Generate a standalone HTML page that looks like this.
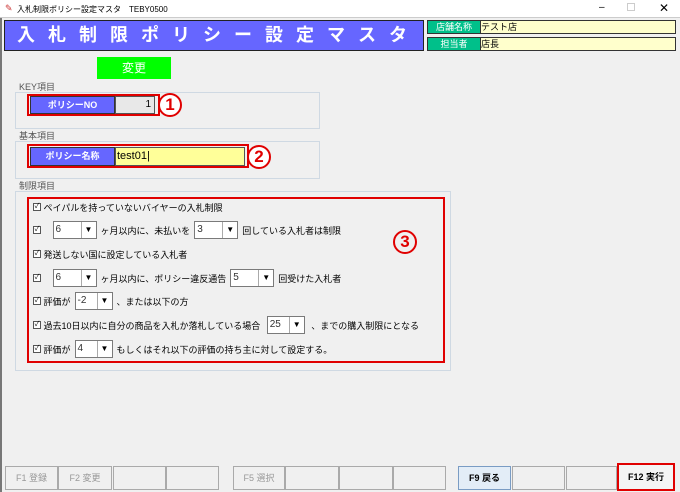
<!DOCTYPE html>
<html><head><meta charset="utf-8"><style>
*{box-sizing:border-box;margin:0;padding:0}
body{width:680px;height:492px;background:#f0f0f0;font-family:"Liberation Sans","Noto Sans CJK JP",sans-serif;position:relative;overflow:hidden;font-size:9px;color:#000}
.a{position:absolute}
.tb{left:0;top:0;width:680px;height:18px;background:#fff;border-bottom:1px solid #ccc}
.fs{border:1px solid #cfd9e3;}
.lg{background:#f0f0f0;color:#555;font-size:9px;padding:0 2px;line-height:10px}
.red{border:2px solid #e00000}
.blab{background:#6666ff;border:1px solid #333;color:#fff;font-size:9px;font-weight:bold;text-align:center}
.cb{width:8px;height:8px;border:1px solid #555;background:#fff;font-size:7px;line-height:6px;text-align:center}
.row{left:33px;font-size:9px;display:flex;align-items:center;height:18px;white-space:nowrap}
.sel{display:inline-flex;height:18px;border:1px solid #7a7a7a;background:#fff;margin:0 4px}
.sel span{display:inline-block;border-right:1px solid #aaa;padding-left:2px;line-height:16px;color:#333;font-size:10px}
.sel i{display:inline-block;width:14px;text-align:center;font-style:normal;font-size:8px;line-height:16px}
.btn{top:466px;height:24px;border:1px solid #aaa;background:#f0f0f0;color:#999;font-size:9px;text-align:center;line-height:22px}
.num{width:24px;height:24px;border:2.5px solid #e00000;border-radius:50%;color:#e00000;font-weight:bold;font-size:17px;line-height:19px;text-align:center;background:#fff}
</style></head><body>
<div class="a tb"><span class="a" style="left:5px;top:3px;color:#c33;font-size:9px">✎</span><span class="a" style="left:17px;top:4px;font-size:8px">入札制限ポリシー設定マスタ　TEBY0500</span>
<span class="a" style="left:599px;top:2px;font-size:10px">–</span><span class="a" style="left:627px;top:3px;width:8px;height:8px;border:1px solid #ccc"></span><span class="a" style="left:659px;top:1px;font-size:12px">✕</span></div>
<div class="a" style="left:0;top:18px;width:2px;height:474px;background:#777"></div>
<div class="a" style="left:4px;top:20px;width:420px;height:31px;background:#6666ff;border:1px solid #222;color:#fff;font-size:18px;font-weight:bold;letter-spacing:13px;line-height:29px;padding-left:12px">入札制限ポリシー設定マスタ</div>
<div class="a" style="left:427px;top:20px;width:54px;height:14px;background:#00c08a;border:1px solid #333;color:#fff;font-size:9px;text-align:center;line-height:12px">店舗名称</div>
<div class="a" style="left:480px;top:20px;width:196px;height:14px;background:#ffffcc;border:1px solid #333;font-size:9px;line-height:12px">テスト店</div>
<div class="a" style="left:427px;top:37px;width:54px;height:14px;background:#00c08a;border:1px solid #333;color:#fff;font-size:9px;text-align:center;line-height:12px">担当者</div>
<div class="a" style="left:480px;top:37px;width:196px;height:14px;background:#ffffcc;border:1px solid #333;font-size:9px;line-height:12px">店長</div>
<div class="a" style="left:97px;top:57px;width:74px;height:22px;background:#00ff00;color:#fff;font-size:12px;text-align:center;line-height:22px">変更</div>

<div class="a fs" style="left:15px;top:92px;width:305px;height:37px"></div>
<div class="a lg" style="left:17px;top:82px">KEY項目</div>
<div class="a red" style="left:27px;top:94px;width:133px;height:22px"></div>
<div class="a blab" style="left:30px;top:96px;width:85px;height:18px;line-height:16px">ポリシーNO</div>
<div class="a" style="left:115px;top:96px;width:40px;height:18px;background:#e8e8e8;border:1px solid #555;text-align:right;padding-right:3px;line-height:16px;font-size:10px">1</div>
<div class="a num" style="left:158px;top:93px">1</div>

<div class="a fs" style="left:15px;top:141px;width:305px;height:38px"></div>
<div class="a lg" style="left:17px;top:131px">基本項目</div>
<div class="a red" style="left:27px;top:144px;width:222px;height:24px"></div>
<div class="a blab" style="left:30px;top:147px;width:85px;height:19px;line-height:17px">ポリシー名称</div>
<div class="a" style="left:115px;top:147px;width:130px;height:19px;background:#ffff99;border:1px solid #555;line-height:17px;font-size:11px;padding-left:1px">test01|</div>
<div class="a num" style="left:247px;top:145px">2</div>

<div class="a fs" style="left:15px;top:191px;width:436px;height:180px"></div>
<div class="a lg" style="left:17px;top:181px">制限項目</div>
<div class="a red" style="left:27px;top:197px;width:418px;height:166px"></div>
<div class="a num" style="left:393px;top:230px;background:none">3</div>

<div class="a row" style="top:198px"><span class="cb">✓</span>&nbsp;ペイパルを持っていないバイヤーの入札制限</div>
<div class="a row" style="top:221px"><span class="cb">✓</span>&nbsp;&nbsp;&nbsp;<span class="sel"><span style="width:28px">6</span><i>▼</i></span>ヶ月以内に、未払いを<span class="sel"><span style="width:28px">3</span><i>▼</i></span>回している入札者は制限</div>
<div class="a row" style="top:245px"><span class="cb">✓</span>&nbsp;発送しない国に設定している入札者</div>
<div class="a row" style="top:269px"><span class="cb">✓</span>&nbsp;&nbsp;&nbsp;<span class="sel"><span style="width:28px">6</span><i>▼</i></span>ヶ月以内に、ポリシー違反通告<span class="sel"><span style="width:28px">5</span><i>▼</i></span>回受けた入札者</div>
<div class="a row" style="top:292px"><span class="cb">✓</span>&nbsp;評価が<span class="sel"><span style="width:22px">-2</span><i>▼</i></span>、または以下の方</div>
<div class="a row" style="top:316px"><span class="cb">✓</span>&nbsp;過去10日以内に自分の商品を入札か落札している場合&nbsp;<span class="sel"><span style="width:22px">25</span><i>▼</i></span>&nbsp;、までの購入制限にとなる</div>
<div class="a row" style="top:340px"><span class="cb">✓</span>&nbsp;評価が<span class="sel"><span style="width:22px">4</span><i>▼</i></span>もしくはそれ以下の評価の持ち主に対して設定する。</div>

<div class="a btn" style="left:5px;width:53px">F1 登録</div>
<div class="a btn" style="left:58px;width:54px">F2 変更</div>
<div class="a btn" style="left:113px;width:53px"></div>
<div class="a btn" style="left:166px;width:53px"></div>
<div class="a btn" style="left:233px;width:52px">F5 選択</div>
<div class="a btn" style="left:285px;width:54px"></div>
<div class="a btn" style="left:339px;width:54px"></div>
<div class="a btn" style="left:393px;width:53px"></div>
<div class="a btn" style="left:458px;width:53px;background:#e3edf7;border-color:#7a9cc4;color:#000;font-weight:bold">F9 戻る</div>
<div class="a btn" style="left:512px;width:53px"></div>
<div class="a btn" style="left:566px;width:51px"></div>
<div class="a btn" style="left:617px;width:58px;top:463px;height:28px;border:2px solid #e00000;color:#000;font-weight:bold;line-height:24px;background:#f4f4f4">F12 実行</div>
</body></html>
